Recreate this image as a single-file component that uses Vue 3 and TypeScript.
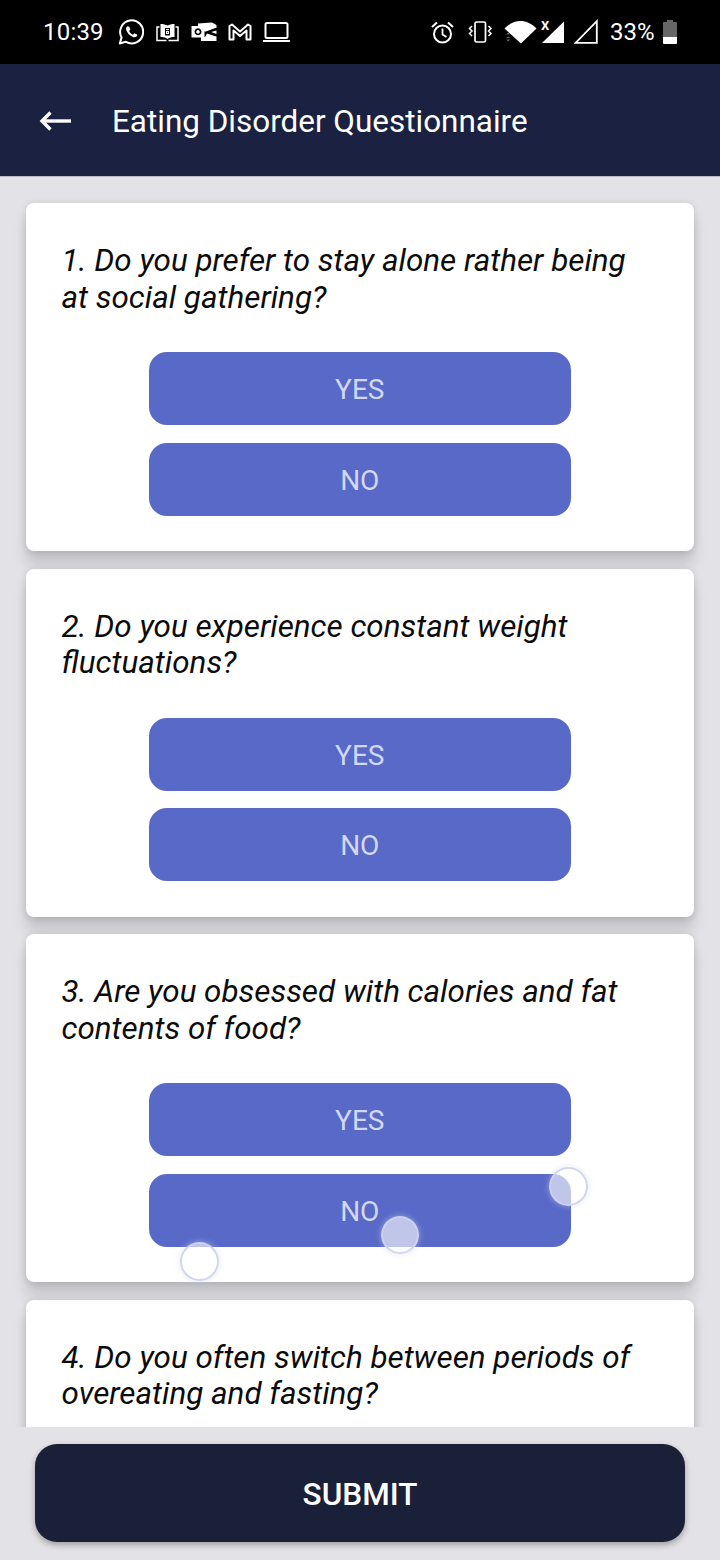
<script setup lang="ts">
interface Question { id: number; text: string; answersInView: boolean }
const questions: Question[] = [
  { id: 1, text: '1. Do you prefer to stay alone rather being at social gathering?', answersInView: true },
  { id: 2, text: '2. Do you experience constant weight fluctuations?', answersInView: true },
  { id: 3, text: '3. Are you obsessed with calories and fat contents of food?', answersInView: true },
  { id: 4, text: '4. Do you often switch between periods of overeating and fasting?', answersInView: false },
]
</script>

<template>
  <div class="screen">
    <div class="status">
      <span class="time">10:39</span>
      <svg class="i-wa" width="26" height="26" viewBox="0 0 26 26" fill="none" stroke="#fff">
        <path d="M1.800 24.500l1.800-6.100A11.500 11.500 0 1 1 7.900 22.800z" stroke-width="2" stroke-linejoin="round"/>
        <path d="M9.600 7.200c-1.500.8-2 2.400-1.200 4.400 1.200 3 3.500 5.200 6.500 6.400 2 .7 3.600.2 4.300-1.400l-.2-1.100-2.600-1.300-1.500 1.500c-1.700-.7-3-2-3.800-3.700l1.300-1.500-1.100-2.700z" fill="#fff" stroke="none"/>
      </svg>
      <svg class="i-am" width="23" height="19" viewBox="0 0 23 19">
        <path d="M3.500 4H1v13.500h9.500" fill="none" stroke="#fff" stroke-width="1.500"/>
        <path d="M19.500 4H22v13.500h-9.500" fill="none" stroke="#fff" stroke-width="1.500"/>
        <path d="M4.500 1c2.800 0 5.300.5 7 1.600C13.200 1.500 15.700 1 18.500 1v13c-2.800 0-5.200.5-7 2-1.800-1.500-4.200-2-7-2z" fill="#fff"/>
        <path d="M9 5h5v7.500H9z" fill="#111"/>
        <path d="M10 6h3v1h-3zM10 8h3v3h-3z" fill="#fff"/>
        <path d="M11.200 9h.8v1h-.8z" fill="#111"/>
      </svg>
      <svg class="i-ol" width="26" height="20" viewBox="0 0 26 20">
        <path d="M7 4V1.500L21 .5 25.500 3v3L15 10 13 9V4z" fill="#fff"/>
        <path d="M10 19v-4h4l2-3.500 9.500 3V19z" fill="#fff"/>
        <path d="M0.500 4h13v11.500h-13z" fill="#fff"/>
        <path d="M7 6.300a3.500 3.500 0 1 0 .01 0zm0 1.700a1.800 1.800 0 1 1-.01 0z" fill="#000" fill-rule="evenodd"/>
        <path d="M25.500 6.500L16 10l9.500 3.500" fill="none" stroke="#000" stroke-width="1.600"/>
        <path d="M25.500 8.500L20 10l5.500 2z" fill="#fff"/>
      </svg>
      <svg class="i-m" width="24" height="18" viewBox="0 0 24 18" fill="none" stroke="#fff" stroke-width="2" stroke-linejoin="round">
        <path d="M1.500 16.500V3L4 1.500l8 7 8-7L22.500 3v13.500h-4V7.500L12 13 5.500 7.500v9z"/>
      </svg>
      <svg class="i-lap" width="27" height="20" viewBox="0 0 27 20" fill="none" stroke="#fff">
        <rect x="2.500" y="1" width="22" height="15" rx="1.500" stroke-width="2"/>
        <path d="M0 19h27" stroke-width="2"/>
      </svg>
      <span class="spacer"></span>
      <svg class="i-al" width="23" height="23" viewBox="0 0 23 23" fill="none" stroke="#fff" stroke-width="2">
        <circle cx="11.500" cy="13" r="8.500"/>
        <path d="M11.500 7.500V13.500L15.500 16" stroke-width="1.800"/>
        <path d="M1 6l5-4.500M22 6l-5-4.500"/>
      </svg>
      <svg class="i-vb" width="25" height="22" viewBox="0 0 25 22" fill="none" stroke="#fff" stroke-width="1.700">
        <rect x="7" y="1" width="10.500" height="20" rx="1.500"/>
        <path d="M4 5L1.500 7.500 4 10 1.500 12.500 4 15M20.500 5L23 7.500 20.500 10 23 12.500 20.500 15" stroke-width="1.500"/>
      </svg>
      <svg class="i-wf" width="33" height="25" viewBox="0 0 33 25">
        <path d="M.5 9.500C10-.5 23-.5 32.500 9.500L17 24.500z" fill="#fff"/>
        <path d="M2.500 15.500l1.700-2 1.700 2zM2.500 18h3.400v.8H2.500zM2.500 20.500l1.700 2 1.700-2z" fill="#777"/>
      </svg>
      <span class="sx">
        <svg width="24" height="25" viewBox="0 0 24 25">
          <path d="M23 2.500V24H1z" fill="#fff"/>
        </svg>
        <span class="x-mark">X</span>
      </span>
      <svg class="i-se" width="24" height="25" viewBox="0 0 24 25" fill="none" stroke="#fff" stroke-width="1.800">
        <path d="M22.800 2.200v21.600H1.600z"/>
      </svg>
      <span class="pct">33%</span>
      <svg class="i-bt" width="14" height="24" viewBox="0 0 14 24">
        <path d="M4 0h6v2h3a1 1 0 0 1 1 1v14H0V3a1 1 0 0 1 1-1h3z" fill="#666"/>
        <path d="M0 17h14v6a1 1 0 0 1-1 1H1a1 1 0 0 1-1-1z" fill="#fff"/>
      </svg>
    </div>

    <header class="bar">
      <svg class="back" width="34" height="24" viewBox="0 0 34 24" fill="none" stroke="#fff" stroke-width="3.400">
        <path d="M4 12h29"/>
        <path d="M12.500 3.500L4 12l8.500 8.500"/>
      </svg>
      <h1 class="title">Eating Disorder Questionnaire</h1>
    </header>

    <main class="list">
      <section v-for="q in questions" :key="q.id" class="card">
        <p class="question">{{ q.text }}</p>
        <div v-if="q.answersInView" class="answers">
          <button class="answer" type="button">YES</button>
          <button class="answer" type="button">NO</button>
        </div>
      </section>
    </main>

    <footer class="foot">
      <button class="submit" type="button">SUBMIT</button>
    </footer>

    <span class="touch t1"></span>
    <span class="touch t2"></span>
    <span class="touch t3"></span>
  </div>
</template>

<style>
html, body { margin: 0; background: #e2e2e7; }
</style>

<style scoped>
.screen {
  position: relative;
  width: 720px;
  height: 1560px;
  display: flex;
  flex-direction: column;
  overflow: hidden;
  background: #e2e2e7;
  font-family: Roboto, "Liberation Sans", sans-serif;
}
.status {
  flex: 0 0 64px;
  height: 64px;
  display: flex;
  align-items: center;
  padding: 0 43px;
  background: #000;
  color: #fff;
  box-sizing: border-box;
}
.time { font-size: 24px; letter-spacing: 0.2px; width: 75px; flex: none; }
.status svg { flex: none; display: block; }
.i-am { margin-left: 12px; }
.i-ol { margin-left: 12px; }
.i-m { margin-left: 11px; }
.i-lap { margin-left: 11px; }
.spacer { flex: 1; }
.i-vb { margin-left: 14px; }
.i-wf { margin-left: 11px; margin-top: -2px; }
.sx { position: relative; flex: none; width: 24px; height: 25px; margin-left: 4px; margin-top: -2px; }
.i-se { margin-left: 9px; margin-top: -2px; }
.pct { font-size: 24px; margin-left: 12px; width: 46px; flex: none; }
.i-bt { margin-left: 7px; }
.x-mark {
  position: absolute;
  left: 0;
  top: 0;
  font-size: 13px;
  line-height: 13px;
  font-weight: 700;
  color: #fff;
}

.bar {
  flex: 0 0 113px;
  height: 113px;
  box-sizing: border-box;
  display: flex;
  align-items: center;
  padding: 2px 0 0 38px;
  background: #1b2140;
  border-bottom: 1px solid #b9b9c6;
}
.back { flex: none; }
.title {
  margin: 0 0 0 40px;
  font-size: 31.450px;
  font-weight: 400;
  color: #fff;
}

.list {
  flex: 0 0 1250px;
  height: 1250px;
  overflow: hidden;
  box-sizing: border-box;
  padding: 26px 26px 0;
  display: flex;
  flex-direction: column;
  gap: 17.500px;
}
.card {
  flex: none;
  height: 348px;
  box-sizing: border-box;
  padding: 40px 36px 0 35.500px;
  background: #fff;
  border-radius: 8px;
  box-shadow: 0 14px 14px rgba(0, 0, 0, 0.13), 0 1px 7px rgba(0, 0, 0, 0.14);
}
.question {
  margin: 0;
  height: 72px;
  font-size: 31.400px;
  line-height: 36.500px;
  font-style: italic;
  color: #0c0c0c;
}
.answers {
  margin-top: 37px;
  display: flex;
  flex-direction: column;
  align-items: center;
  gap: 17.500px;
}
.answer {
  width: 422px;
  height: 73px;
  padding: 2px 0 0;
  border: 0;
  border-radius: 18px;
  background: #5869c7;
  color: #d3d8f1;
  font-family: inherit;
  font-size: 28px;
}

.foot {
  flex: 1;
  position: relative;
  padding: 17px 35px 0;
  background: #e2e2e7;
}
.submit {
  display: block;
  width: 650px;
  height: 98px;
  padding: 2px 0 0;
  border: 0;
  border-radius: 22px;
  background: #1b2039;
  color: #fff;
  font-family: inherit;
  font-size: 31.500px;
  font-weight: 500;
  box-shadow: 0 3px 6px rgba(0, 0, 0, 0.3);
}

.touch {
  position: absolute;
  box-sizing: border-box;
  width: 39px;
  height: 39px;
  border-radius: 50%;
  background: rgba(255, 255, 255, 0.62);
  border: 2.500px solid rgba(205, 210, 236, 0.9);
  box-shadow: 0 0 6px rgba(208, 213, 238, 0.55);
}
.t1 { left: 381px; top: 1216px; width: 38px; height: 38px; }
.t2 { left: 548.500px; top: 1166.500px; }
.t3 { left: 180px; top: 1241.500px; }
</style>
